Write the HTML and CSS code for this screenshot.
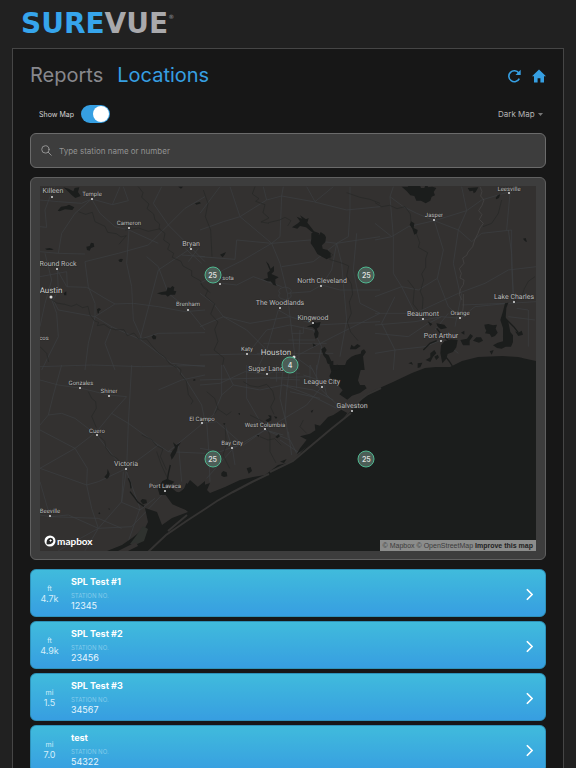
FILE: index.html
```html
<!DOCTYPE html>
<html lang="en">
<head>
<meta charset="utf-8">
<meta name="viewport" content="width=device-width, initial-scale=1">
<title>SureVue - Locations</title>
<link rel="stylesheet" href="styles.css">
</head>
<body>
<div class="app">
  <header class="brand"><span class="brand-sure">SURE</span><span class="brand-vue">VUE</span><sup class="brand-mark">®</sup></header>
  <main class="panel">
    <div class="topbar">
      <nav class="tabs">
        <a href="#reports">Reports</a>
        <a href="#locations" class="active" aria-current="page">Locations</a>
      </nav>
      <div class="actions">
        <button type="button" aria-label="Refresh">
          <svg viewBox="0 0 14 14"><path d="M12.300 9.600A5.500 5.500 0 1 1 11.800 4" fill="none" stroke="currentColor" stroke-width="1.600"/><path d="M13.700 .8V6H8.500z" fill="currentColor"/></svg>
        </button>
        <button type="button" aria-label="Home">
          <svg viewBox="0 0 14 14"><path d="M7 .4 0 7.200h2v6.400h3.600V9.200h2.800v4.400H12V7.200h2z" fill="currentColor"/></svg>
        </button>
      </div>
    </div>
    <div class="options">
      <label class="show-map">Show Map <input type="checkbox" role="switch" checked></label>
      <div class="style-picker">
        <select aria-label="Map style"><option>Dark Map</option></select>
        <svg viewBox="0 0 5 3"><path d="M0 0h5L2.500 3z" fill="currentColor"/></svg>
      </div>
    </div>
    <label class="search">
      <svg viewBox="0 0 12 12" fill="none" stroke="currentColor" stroke-linecap="round"><circle cx="4.800" cy="4.800" r="4"/><path d="m7.800 7.800 3.400 3.400"/></svg>
      <input type="text" aria-label="Search stations" placeholder="Type station name or number">
    </label>
    <section class="map-card" aria-label="Map">
      <div class="map">
        <svg class="map-art" viewBox="40 186 496 365">
          <rect class="land" x="40" y="186" width="496" height="365"/>
          <!-- roads, drawn on six tiles at three units per pixel -->
          <g class="roads">
            <g transform="translate(25 170) scale(.33333)">
              <path d="M45 90 100 95 170 100 200 87 262 104 285 50M262 104 310 92 295 50M45 170 65 172 60 120 75 80 90 50M200 87 225 130 270 170 312 180 400 220M45 245 100 250 180 252M100 250 110 190 150 130 200 87M180 275 280 250 370 225 430 165 480 115 540 80M430 165 385 100 400 70 410 50M430 165 500 235 540 275M312 180 305 280 320 350 325 450 350 505M180 275 190 350 210 400 210 440 270 402 325 400 400 410 480 425 540 420M97 300 125 350 185 352 240 385 270 402M97 300 100 360 85 390 100 420 210 440 260 470 345 508M210 440 190 520 180 600M260 470 240 520 270 600M345 508 400 300 490 240M345 508 400 490 540 488M345 508 440 580 540 590M490 418 430 370 400 290 365 260M490 418 540 480M45 320 125 305 127 350M60 250 80 330 60 400 45 470M77 380 95 430 100 500 50 600M45 590 200 585 350 590 540 586M480 235 530 280M520 235 490 275M470 255 540 260"/>
            </g>
            <g transform="translate(200 170) scale(.33333)">
              <path d="M0 130 60 50M0 180 70 155 120 140 200 90 245 78 340 95 440 120 540 110M90 50 120 140 215 220 240 280 262 370 270 440 285 560M190 50 200 90M250 50 245 78 240 200 215 220 130 270 70 300 0 340M320 50 345 95 400 50M450 50 450 120 445 200 410 220 395 300 365 345M215 220 330 210 410 220 540 200M0 260 105 268 110 210 215 220M245 290 340 275 410 220 425 280 430 340 440 450 420 560M65 340 110 345 160 320 245 350M262 370 330 365 365 345 420 360 540 360M0 470 70 440 150 460 270 440 350 465 540 455M70 440 40 400 0 370M70 440 140 480 200 540 280 560M240 370a18 12 0 1 0 30 0 18 12 0 1 0-30 0M160 530 200 480 270 465 340 480 365 530 350 600M170 550H400M190 520H380M270 440 235 420 200 540 170 600M285 560 400 500 540 430M285 560 140 552 0 555M285 560 340 600M275 490H310V470M265 510H345M300 480 295 600M470 190 460 300 480 400 540 430"/>
            </g>
            <g transform="translate(375 170) scale(.33333)">
              <path d="M55 50 45 80 85 110 125 130 178 152 275 122 320 90 420 60M45 80 55 200 55 310 80 350 120 430 145 450M0 210 50 200 100 170 178 152 205 240 187 325 220 410 257 445M0 160 50 200M178 152 250 180 290 215 320 190 410 180V290L416 400M260 50 275 122 250 180 235 280 255 370M0 380 80 350 130 360 187 325M0 430 120 430 250 370 330 340 400 300 484 290M0 465 120 455 200 440 255 445 300 410 400 400 484 395M416 400 410 250 400 180M0 550 60 540 150 530 200 510M60 540 55 600M60 540 20 460 60 380M200 510 250 550M395 180 405 70M240 470 260 370M220 430 180 480M260 405 390 400M425 415 460 420V530M400 440 480 450M0 490 100 500 160 460 200 440"/>
            </g>
            <g transform="translate(25 365) scale(.33333)">
              <path d="M45 45 100 60 170 70 250 90 305 95 260 145 215 200 150 250 45 310M45 180 70 150 110 145 150 160 215 210 270 280 305 320 345 430 300 557M70 150 85 90 110 0M260 145 310 175 320 0M310 175 400 240 430 260 540 265M310 175 305 310 220 350 185 360 45 310M185 360 187 310 150 250 45 195M400 240 305 310 290 410 220 490 180 557M430 260 540 170 530 120 480 40 450 0M400 75 470 45 540 30M460 235 470 350M45 450 75 455 220 460 290 490M220 490 130 450 75 455 45 350M220 490 320 485 420 380M185 360 200 430 220 490M100 557 220 490M295 320 290 412 345 435 390 400"/>
            </g>
            <g transform="translate(200 365) scale(.33333)">
              <path d="M0 60 60 55 135 20 200 28 270 0M65 0 65 90 40 150 0 180M65 90 100 60 180 75 250 60 330 90 410 130M0 45 150 40 330 35M140 0 140 100 195 195 270 225 290 265M195 195 100 250 20 340M195 195 320 120 365 65 330 0M270 0 260 80 255 150 265 220M250 0 240 100 260 180M75 180 97 250 105 300M0 175 50 170 130 240 195 195 250 210M310 30 370 50 380 90 430 135M215 20 300 25M210 40 300 45M230 0V50M290 0V70M250 60 340 75 400 105M20 170 25 240 30 350M0 250 60 260 130 235M270 80 360 100M340 50 390 100M240 225 300 265M265 200 275 270M100 60 70 0M330 0V60M350 0V45"/>
            </g>
          </g>
          <g class="streams">
            <g transform="translate(25 170) scale(.33333)">
              <path d="m340 50 14 18-4 14 22 20-6 14 20 16 4 18 14 12-2 14 18 14-4 20 18 12-6 16 18 12-4 12 26 12 6 14 26 14 0 16 26 14 8 20 22 16M160 125l22 8 20-6 8 28 30 14 8 18 26 4 14 10 16-4-12 14-10 12M75 385l20 14 24 4 20 6 16-6 18 10 16-4 6 26 14 18 12 4-4 10 20-4 18 12 16 4 26 0 10 18 20-8 14 18 24 0 14 18 20 22 20 14 14 20 22 12M300 180l40-6 30 10 36-8M45 530l20 20 6 26"/>
            </g>
            <g transform="translate(200 170) scale(.33333)">
              <path d="m165 50-8 22 20 14-10 8 28 10-6 24 18 16-24 12 24 4M10 60l14 40-8 40 16 40 4 80M205 158l34-8 16-8 18 10-10 16M380 240l18 14-10 14 40 12 18 8-6 30 14 24 4 30-10 24 6 34-12 26 10 30 22 26M0 340l24 20-8 18 28 24-12 30 22 24-10 22 10 36-12 26 30 24-4 20M440 68l40 14 30 6 30 12"/>
            </g>
            <g transform="translate(375 170) scale(.33333)">
              <path d="m0 98 20 12 24-4 22 10 24-6 16 22 2 24M124 190l10 28-4 14 28 16-6 18 0 26-12 20 6 18-10 34 8 20-2 34M98 330l20 26-4 46 16 20M480 320l-20 14-12 22-6 18-20 8 0 16M380 90l-10 40-20 30-26 10"/>
              <path class="river" d="m315 50 6 14-4 14 10 12-6 16-10 16 10 12-8 14 12 12-10 14-6 16-10 20-6 20-14 16-4 10-12 8 4 16-14 16 6 14-4 14 12 6-2 14-8 12-4 18 8 16M265 372l0 36-4 36"/>
            </g>
            <g transform="translate(25 365) scale(.33333)">
              <path d="m190 80 10 20 12 10 2 20-14 24 14 34M225 215l14 14 4 20 14 20 20 12 30 40M450 0l18 14-2 14 18 20 6 40 14 20-6 10M350 210l30 14 14 18 20 10-8 22 18 40M395 260l14 40 14 30 10 20"/>
            </g>
            <g transform="translate(200 365) scale(.33333)">
              <path d="m130 50 20 12 24 4 26-8 18 20 6 24-12 24 10 22M20 80l24 20 10 30-10 16M150 150l40 20 20 40 0 50 18 34M75 180l4 60-10 30 20 40M50 130l30 20 14-10M180 215l24 10 20-4 20 20M310 165l-10 20 20 20"/>
            </g>
          </g>
          <!-- Gulf of Mexico and its bays -->
          <path class="water" d="M536 361 518 357 502 356 478 357 462 361 450 367 436 367 425 368 412 373 393 382 375 390 367 394 357 405 347 415 327 430 303 450 292 462 278 465 265 475 253 477 240 480 225 487 210 493 207 490 210 483 198 487 190 480 185 488 173 497 188 512 172 518 162 525 157 512 145 508 148 522 145 528 132 538 122 545 107 551H536Z"/>
          <g class="water">
            <path transform="translate(200 365) scale(.33333)" d="M388 0 394 20 388 34 400 52 412 58 428 76 418 88 442 104 456 92 480 84 500 70 494 60 480 60 474 46 486 0ZM424 134 400 150 384 156 360 182 344 178 346 196 330 206 300 214 320 224 300 250 290 268 370 210 430 160 442 144Z"/>
            <path transform="translate(200 170) scale(.33333)" d="M430 600 440 572 454 560 466 555 488 550 494 600ZM484 542l8-4 6 8-8 12-8-6ZM454 524l8 6 10-8 10 6-14 10-18 0Z"/>
            <path transform="translate(25 365) scale(.33333)" d="m412 348 14-6 22 8-14 14 20 16 18 4 12-30 14 12 20 0 22-18v90l-50 0-24-10-24-10-20-28-18 0-6-20Z"/>
          </g>
          <path class="island" d="m148 552 18-17 22-15 17-11 12-8 16-9 19-10 17-8M168 531l19-16"/>
          <path class="island" d="m270 472 23-11 13-11 25-21 20-16M357 402l11-8 13-6"/>
          <path class="park" d="m136 536 7-10 5 3-4 12-9 4-5-1z"/>
          <path class="land" d="M118 551 136 542 138 546 128 551Z"/>
          <!-- lakes -->
          <g class="water">
            <g transform="translate(25 170) scale(.33333)">
              <path d="m115 52 16 4 14 8 4-10 14-2-4 14 8 12-16 6-12-10-8-8ZM98 122l10-12 16-2 8-4 8 4 8 4-6 8-22-2-16 6ZM60 236l14-2 12 4-6 2-14 0ZM184 230l10-2 4-10 8 2 2 10-10 4-4 8-8-2ZM280 270l8-4 6 2-4 8-6 0ZM396 370l14-4 14-2 4-12 8 2 6-6 6 4-2 10 8 2-4 10-14 0-8 6-6-6-12 0ZM216 418l6-4 6 4-6 6 0 6-4 0ZM380 500l6-6 8 6-2 8-8 0ZM116 370l8-6 0 12-6 0ZM510 100l14-4 4 4-14 4ZM460 50l8 6 6-6Z"/>
            </g>
            <g transform="translate(200 170) scale(.33333)">
              <path d="m276 172 18-12 6-6-10-14 16 6-6-10 18 12 8-4-4 14 8 10 12 16 16 6-4 6-14-6-22-18-18-4-8 8ZM334 190l12-4 12 8 4-8 12 8 4 8-2 14-10 10 2 10 14 4 10 10 0 12-12 6-14-8-14-8-10-18-10-14 2-14ZM198 274l8 8 6 14 10-8 0 16-8 8 14 6 8 4-10 6 0 12 4 8-10-4-8-10-10 0-12-6 14-4-2-16 8-6ZM60 254l18-8-4 8-6 8ZM320 470l20-8-2-10 10 6 14-2-4 14-8 6 6 12-2 14-8 4-4-14 4-12-8-8ZM338 520l10 6-8 4ZM364 538l10-8 6 10-6 10 12 6 8 18 6-2 0 14 14-2 6 14-20 4-8-16-10-6-4-14-8-10Z"/>
            </g>
            <g transform="translate(375 170) scale(.33333)">
              <path d="m80 50 14 12 12 14 12 2 6 14 14 0 14 8 14-8 4-12 10-4-4-10 8-12-12-4-14 2 2-12-8 4-4 10-10 0-4-10-10 4-10-2-6-6-10 10ZM278 54l6 10 10-2 2 8 6-4 8-14ZM104 164l4-10 10 6-2 14 12 6-2 10-8 4-6-18ZM362 84l6-8 8-4-4 12-8 4ZM444 206l8-2 4 12-6-2ZM196 550l2-24 10-12 20-6 20 2-4 22-10 14-16 6-4 14-12 14ZM184 460l24 4 8 10-18 4-10-8ZM158 454l14 8-6 6ZM328 464l12-2 14 4 12-2-4 12 6 12-8 10-10 4-6-10-14-2 4-8-4-8ZM294 512l10-10 14 0 6 10-12 6ZM256 510l20-4 10-14 8 6-10 14 0 14-20 0ZM258 488l10-6 0 12ZM420 484l10 4 10-6 4 12-14 4ZM344 544l12-4-6 14ZM376 450l8-26 6-24 10-2-6 16-2 30 8 12 6 30 8 10 0 20-6 14-16 0-12 6-14-2-12-8 14-8 16-4 0-40ZM152 570l14-8 0-12 12-10 6 10-10 10-8 16ZM128 580l14-2-6 14-8 2ZM100 580l10-4 4 8ZM178 560l10-6 4 8-8 8Z"/>
              <path class="channel" d="m200 545 22 28 10 15M185 475l15 20 20 16M145 540l20-20 20-8M386 440l30 30 14 18"/>
            </g>
            <g transform="translate(25 365) scale(.33333)">
              <path d="m436 270 6-12 8-10-6-16 10 8 14-8-10 14-4 16-8 14-6 8ZM238 336l8-10 2-14 6 14-2 10-6 6ZM346 408l6-6 12 2 2 10-12 4ZM220 444l4-2 2 4-4 2ZM250 430l6 2-4 2ZM504 44l6-2 2 4-6 2Z"/>
              <path class="channel" d="m310 340 6 14 2 16M315 380l14 18 10 14 18 12M436 300l-6 26-4 26"/>
            </g>
            <g transform="translate(200 365) scale(.33333)">
              <path d="m64 324 6-6 10 4 2 12-10 2-8-4ZM226 216l10-8 4 6-8 6ZM170 210l8 0-2 6ZM196 166l14-8-6-8 10 2 0 14-10 6ZM222 154l10 2-4 6ZM114 146l6-2 0 6ZM68 176l8-2-2 6ZM332 138l8-4-4 10ZM240 290l20-8-8 12ZM140 310l12-4 4 12-10 8Z"/>
            </g>
          </g>
          <g class="dots">
            <circle cx="52" cy="197" r="1"/><circle cx="92" cy="199" r="1"/><circle cx="129" cy="228" r="1"/><circle cx="191" cy="249" r="1"/><circle cx="57" cy="269" r="1"/><circle cx="51" cy="297" r="1.500"/><circle cx="188" cy="310" r="1"/><circle cx="220" cy="284" r="1"/><circle cx="321" cy="286" r="1"/><circle cx="280" cy="308" r="1"/><circle cx="313" cy="323" r="1"/><circle cx="247" cy="354" r="1"/><circle cx="294" cy="357" r="1.500"/><circle cx="267" cy="374" r="1"/><circle cx="322" cy="387" r="1"/><circle cx="352" cy="411" r="1"/><circle cx="509" cy="193" r="1"/><circle cx="434" cy="220" r="1"/><circle cx="514" cy="302" r="1"/><circle cx="423" cy="319" r="1"/><circle cx="460" cy="318" r="1"/><circle cx="441" cy="341" r="1"/><circle cx="80" cy="388" r="1"/><circle cx="109" cy="396" r="1"/><circle cx="97" cy="435" r="1"/><circle cx="126" cy="469" r="1"/><circle cx="165" cy="491" r="1"/><circle cx="50" cy="516" r="1"/><circle cx="202" cy="423" r="1"/><circle cx="265" cy="429" r="1"/><circle cx="232" cy="448" r="1"/>
          </g>
          <g class="places">
            <text x="53" y="193">Killeen</text>
            <text class="small" x="92" y="196">Temple</text>
            <text class="small" x="129" y="225">Cameron</text>
            <text x="191" y="246">Bryan</text>
            <text x="58" y="266">Round Rock</text>
            <text class="city" x="51" y="293">Austin</text>
            <text class="small" x="188" y="306">Brenham</text>
            <text class="small" x="228" y="280">sota</text>
            <text x="322" y="283">North Cleveland</text>
            <text x="280" y="305">The Woodlands</text>
            <text x="313" y="320">Kingwood</text>
            <text class="small" x="247" y="351">Katy</text>
            <text class="city" x="276" y="355">Houston</text>
            <text x="266" y="371">Sugar Land</text>
            <text x="322" y="384">League City</text>
            <text x="352" y="408">Galveston</text>
            <text class="small" x="509" y="191">Leesville</text>
            <text class="small" x="434" y="217">Jasper</text>
            <text x="514" y="299">Lake Charles</text>
            <text x="423" y="316">Beaumont</text>
            <text class="small" x="460" y="315">Orange</text>
            <text x="441" y="338">Port Arthur</text>
            <text class="small" x="44" y="340">cos</text>
            <text class="small" x="81" y="385">Gonzales</text>
            <text class="small" x="109" y="393">Shiner</text>
            <text class="small" x="97" y="433">Cuero</text>
            <text x="126" y="466">Victoria</text>
            <text class="small" x="165" y="488">Port Lavaca</text>
            <text class="small" x="50" y="513">Beeville</text>
            <text class="small" x="202" y="421">El Campo</text>
            <text class="small" x="265" y="427">West Columbia</text>
            <text class="small" x="232" y="445">Bay City</text>
          </g>
        </svg>
        <button type="button" class="cluster cluster-northwest">25</button>
        <button type="button" class="cluster cluster-northeast">25</button>
        <button type="button" class="cluster cluster-houston">4</button>
        <button type="button" class="cluster cluster-southwest">25</button>
        <button type="button" class="cluster cluster-southeast">25</button>
        <a class="mapbox" href="#mapbox">
          <svg viewBox="0 0 12 12"><circle cx="6" cy="6" r="5.500" fill="#fff"/><path d="M2.700 9.300C2.200 6.800 3 2.800 6.700 2.800A2.900 2.900 0 0 1 9.400 5.500C9.400 8.800 5.500 9.700 2.700 9.300Z" fill="#292929"/><path d="m6.600 3.900.5 1.100 1.200.5-1.200.5-.5 1.200-.5-1.200-1.200-.5 1.200-.5Z" fill="#fff"/></svg>
          <span>mapbox</span>
        </a>
        <div class="attribution"><a href="#about">© Mapbox</a> <a href="#osm">© OpenStreetMap</a> <a class="improve" href="#improve">Improve this map</a></div>
      </div>
    </section>
    <ul class="stations">
      <li><a class="station" href="#12345"><span class="distance"><small>ft</small>4.7k</span><span class="info"><strong>SPL Test #1</strong><small>STATION NO.</small><span>12345</span></span><svg class="chevron" viewBox="0 0 8 14"><path d="m1 1 6 6-6 6"/></svg></a></li>
      <li><a class="station" href="#23456"><span class="distance"><small>ft</small>4.9k</span><span class="info"><strong>SPL Test #2</strong><small>STATION NO.</small><span>23456</span></span><svg class="chevron" viewBox="0 0 8 14"><path d="m1 1 6 6-6 6"/></svg></a></li>
      <li><a class="station" href="#34567"><span class="distance"><small>mi</small>1.5</span><span class="info"><strong>SPL Test #3</strong><small>STATION NO.</small><span>34567</span></span><svg class="chevron" viewBox="0 0 8 14"><path d="m1 1 6 6-6 6"/></svg></a></li>
      <li><a class="station" href="#54322"><span class="distance"><small>mi</small>7.0</span><span class="info"><strong>test</strong><small>STATION NO.</small><span>54322</span></span><svg class="chevron" viewBox="0 0 8 14"><path d="m1 1 6 6-6 6"/></svg></a></li>
    </ul>
  </main>
</div>
</body>
</html>
```
FILE: styles.css
```css
* { box-sizing: border-box; }

body {
  margin: 0;
  background: #212121;
  color: #d5d5d5;
  font-family: Inter, "Liberation Sans", sans-serif;
}

button, input, select { font: inherit; color: inherit; }
button { padding: 0; border: 0; background: none; cursor: pointer; }
a { color: inherit; text-decoration: none; }
svg { display: block; }

.app {
  display: flex;
  flex-direction: column;
  height: 100vh;
  padding: 0 12px;
  overflow: hidden;
}

.brand {
  display: flex;
  flex: none;
  align-items: center;
  height: 48px;
  padding-left: 9px;
  font-family: "DejaVu Sans", sans-serif;
  font-size: 28px;
  font-weight: 700;
  line-height: 28px;
}
.brand-sure { color: #36a5ec; }
.brand-vue { color: #a9a9ac; }
.brand-mark { align-self: flex-start; margin-top: 14px; color: #77777a; font-size: 6px; line-height: 6px; }

.panel {
  flex: 1;
  min-height: 0;
  padding: 12px 17px 0;
  overflow-y: auto;
  scrollbar-width: none;
  background: #171717;
  border: 1px solid #464646;
  border-bottom: 0;
}

.topbar, .options { display: flex; align-items: center; justify-content: space-between; }
.topbar { height: 28px; }
.tabs { display: flex; gap: 14px; color: #88888d; font-size: 20px; line-height: 28px; }
.tabs .active { color: #369fe2; }
.actions { display: flex; gap: 11px; padding-top: 2px; color: #369fe2; }
.actions svg { width: 14px; height: 14px; }

.options { height: 18px; margin-top: 16px; padding: 0 3px 0 9px; }
.show-map { display: flex; align-items: center; gap: 7px; font-size: 7px; }
.show-map input {
  display: flex;
  align-items: center;
  justify-content: flex-end;
  width: 29px;
  height: 18px;
  margin: 0;
  padding: 1px;
  appearance: none;
  background: #369fe2;
  border-radius: 9px;
}
.show-map input::before { content: ""; width: 16px; height: 16px; background: #fff; border-radius: 50%; }
.style-picker { display: flex; align-items: center; gap: 3px; color: #b5b5b5; font-size: 8px; }
.style-picker select { padding: 0; border: 0; appearance: none; background: none; }
.style-picker svg { width: 5px; height: 3px; color: #777; }

.search {
  display: flex;
  align-items: center;
  gap: 7px;
  height: 35px;
  margin-top: 10px;
  padding: 0 10px;
  background: #3d3d3d;
  border: 1px solid #6b6b6b;
  border-radius: 6px;
}
.search svg { width: 11px; height: 11px; color: #9a9a9a; }
.search input { flex: 1; min-width: 0; padding: 0; border: 0; background: none; font-size: 8px; outline: 0; }
.search input::placeholder { color: #929292; opacity: 1; }

.map-card {
  margin-top: 9px;
  padding: 8px 9px;
  background: #3d3d3d;
  border: 1px solid #606060;
  border-radius: 6px;
}
.map { position: relative; overflow: hidden; }
.map-art { width: 100%; height: auto; }
.land { fill: #333130; }
.water { fill: #1b1d1c; }
.park { fill: #2f322f; }
.island { fill: none; stroke: #343332; stroke-width: 2; }
.channel { fill: none; stroke: #1b1d1c; stroke-width: 4; }
.roads { fill: none; stroke: #3d3f43; stroke-width: 2; }
.streams { fill: none; stroke: #262726; stroke-width: 2; }
.streams .river { stroke: #484747; }
.dots { fill: #ddd; }
.places {
  fill: #bdbdbd;
  stroke: #292827;
  stroke-width: 1;
  paint-order: stroke;
  font-family: Roboto, sans-serif;
  font-size: 7px;
  text-anchor: middle;
  text-rendering: geometricPrecision;
}
.places .small { font-size: 6px; }
.places .city { font-size: 8px; fill: #cdcdcd; }

.cluster {
  position: absolute;
  width: 17px;
  height: 17px;
  transform: translate(-50%, -50%);
  background: #4c5e57;
  border: 1px solid #4fb890;
  border-radius: 50%;
  color: #dedede;
  font-size: 7px;
  font-weight: 600;
  line-height: 15px;
}
.cluster-northwest { left: 34.8%; top: 24.5%; }
.cluster-northeast { left: 65.8%; top: 24.5%; }
.cluster-houston { left: 50.4%; top: 49%; }
.cluster-southwest { left: 34.8%; top: 74.7%; }
.cluster-southeast { left: 65.8%; top: 74.7%; }

.mapbox {
  position: absolute;
  left: 4px;
  bottom: 4px;
  display: flex;
  align-items: center;
  gap: 1px;
  color: #fff;
  font-family: Lato, sans-serif;
  font-size: 10px;
  font-weight: 700;
  line-height: 12px;
}
.mapbox svg { width: 12px; height: 12px; }
.attribution {
  position: absolute;
  right: 0;
  bottom: 0;
  padding: 0 3px;
  background: #8b8c8b;
  color: #3b3b3b;
  font-family: "Liberation Sans", sans-serif;
  font-size: 7px;
  line-height: 11px;
}
.improve { color: #222; font-weight: 700; }

.stations { display: grid; gap: 4px; margin: 9px 0 0; padding: 0; list-style: none; }
.station {
  display: flex;
  align-items: center;
  height: 48px;
  padding: 2px 12px 0 0;
  background: linear-gradient(#40bbdc, #379ee1);
  border: 1px solid #2e91b9;
  border-radius: 6px;
  color: #e8f6fd;
  font-size: 9px;
  line-height: 10px;
}
.distance { display: grid; width: 37px; text-align: center; color: #d3eefa; }
.distance small { font-size: 7px; line-height: 10px; }
.info { display: grid; flex: 1; padding-left: 3px; }
.info strong { margin-bottom: 4px; color: #fff; font-weight: 700; }
.info small { color: #84cbeb; font-size: 6px; line-height: 10px; }
.chevron { width: 7px; height: 13px; fill: none; stroke: #fff; stroke-width: 2; }
```
